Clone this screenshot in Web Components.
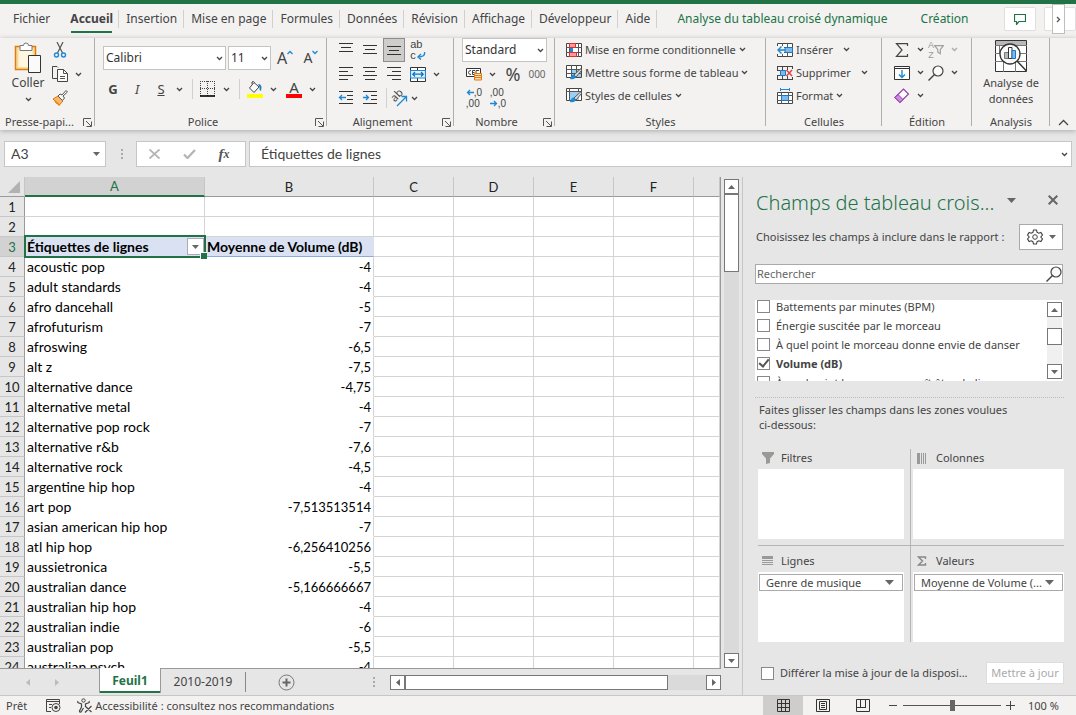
<!DOCTYPE html>
<html lang="fr">
<head>
<meta charset="utf-8">
<meta name="viewport" content="width=device-width, initial-scale=1">
<title>Classeur</title>
<style>
  html, body { margin: 0; height: 100%; }
  body {
    --ui: "Noto Sans", "Open Sans", sans-serif;
    --cell: Lato, "Noto Sans", sans-serif;
    --green: #217346;
    --line: #b1afad;
    font: 12px/16px var(--ui);
    color: #444;
    background: #e6e6e6;
    overflow: hidden;
  }
</style>
</head>
<body>
<excel-app></excel-app>

<script>
const ICONS = {
  chev: [7, 5, '<path d="M1 1l2.5 2.5L6 1" fill="none" stroke="#444" stroke-width="1.3"/>'],
  chevOff: [7, 5, '<path d="M1 1l2.5 2.5L6 1" fill="none" stroke="#aaa" stroke-width="1.3"/>'],
  chevR: [5, 7, '<path d="M1 1l2.5 2.5L1 6" fill="none" stroke="#555" stroke-width="1.3"/>'],
  collapse: [11, 7, '<path d="M1 6l4.500-4.500L10 6" fill="none" stroke="#444" stroke-width="1.3"/>'],
  down: [9, 5, '<path d="M0 0h9L4.500 5z" fill="#666"/>'],
  downS: [7, 4, '<path d="M0 0h7L3.500 4z" fill="#666"/>'],
  upS: [7, 4, '<path d="M0 4h7L3.500 0z" fill="#666"/>'],
  leftS: [4, 7, '<path d="M4 0v7L0 3.500z" fill="#666"/>'],
  rightS: [4, 7, '<path d="M0 0v7l4-3.500z" fill="#666"/>'],
  leftOff: [4, 7, '<path d="M4 0v7L0 3.500z" fill="#bbb"/>'],
  rightOff: [4, 7, '<path d="M0 0v7l4-3.500z" fill="#bbb"/>'],
  launcher: [9, 9, '<path d="M.5 8V.5H8M3 3l5 5M8.500 3.500v5h-5" fill="none" stroke="#555"/>'],
  paste: [28, 31, '<path d="M1.500 4.500h20v23h-20z" fill="#fbdc97" stroke="#e07b10" stroke-width="1.5"/><path d="M4.500 7h14v18h-14z" fill="#fff6e0"/><path d="M6 8.500v-5h3.500a2.500 2.500 0 0 1 5 0H18v5z" fill="#fff" stroke="#777"/><path d="M14.500 13.500h12v17h-12z" fill="#fafafa" stroke="#333"/>'],
  cut: [16, 16, '<path d="M5 0l5.500 11M11 0L5.500 11" stroke="#555" fill="none" stroke-width="1.2"/><circle cx="4.500" cy="13" r="2" fill="none" stroke="#1e88d2" stroke-width="1.4"/><circle cx="11.500" cy="13" r="2" fill="none" stroke="#1e88d2" stroke-width="1.4"/>'],
  copy: [16, 16, '<path d="M6 12.500H.5V.5H5l1 1" fill="none" stroke="#444"/><path d="M5.500 3.500h6l4 4v8h-10z" fill="#fafafa" stroke="#444"/><path d="M11.500 3.500v4h4M8 10.500h5M8 12.500h5" fill="none" stroke="#555"/>'],
  brush: [16, 16, '<path d="M1 9l5-3 5 5-4 4.500q-1-2-3-2.500-1-2.500-3-4z" fill="#fbb862" stroke="#e07b10"/><path d="M2 10l6 5" stroke="#e07b10"/><path d="M6 6l2-2 2 1 4-4.500 1.500 1.500L11 6l1.500 2L10.500 10.500z" fill="#fafafa" stroke="#555"/>'],
  borders: [16, 16, '<path d="M.5 0v15M14.500 0v15M0 .5h15M7.500 0v15M0 7.500h15" stroke="#444" stroke-dasharray="1 1" fill="none"/><path d="M0 15h15" stroke="#000" stroke-width="1.6"/>'],
  fill: [16, 17, '<path d="M7 1.500L12 6l-5 5.500L2.500 7zM5 3V1q1.500-1.500 2.500.5" fill="#fafafa" stroke="#444"/><path d="M11 3q3 0 3.500 3l-.5 4q-2-1-1.500-4z" fill="#1e78c0"/><path d="M0 13h16v4H0z" fill="#ff0"/>'],
  alT: lines([[1,15,1],[3,13,5],[1,15,9]], 16, 14),
  alM: lines([[1,15,3],[3,13,7],[1,15,11]], 16, 14),
  alB: lines([[1,15,4],[3,13,8],[1,15,12]], 16, 14),
  alL: lines([[1,15,1],[1,10,5],[1,15,9],[1,10,13]], 16, 15),
  alC: lines([[1,15,1],[3,13,5],[1,15,9],[3,13,13]], 16, 15),
  alR: lines([[1,15,1],[6,15,5],[1,15,9],[6,15,13]], 16, 15),
  outdent: [16, 14, '<path d="M1 .5h14M9 4.500h6M9 8.500h6M1 12.500h14" stroke="#333"/><path d="M8 6.500H2M4 4L1.500 6.500 4 9" stroke="#1e88d2" fill="none" stroke-width="1.3"/>'],
  indent: [16, 14, '<path d="M1 .5h14M9 4.500h6M9 8.500h6M1 12.500h14" stroke="#333"/><path d="M1 6.500h5.500M4 4l2.500 2.500L4 9" stroke="#1e88d2" fill="none" stroke-width="1.3"/>'],
  merge: [16, 15, '<path d="M.5 .5h15v14H.5z" fill="#fff" stroke="#333"/><path d="M7.500 0v4M7.500 11v4" stroke="#333"/><path d="M.5 3.500h15v7.500H.5z" fill="#e2f1fc" stroke="#1e88d2" stroke-width="1.2"/><path d="M3 7.200h10M5 5L2.800 7.200 5 9.500M11 5l2.200 2.200L11 9.500" stroke="#1070b8" fill="none" stroke-width="1.2"/>'],
  wrapArrow: [10, 8, '<path d="M8.500 0q1 5-6.500 5M5 2L2 5l3 2.500" stroke="#1e88d2" fill="none" stroke-width="1.4"/>'],
  orientArrow: [12, 12, '<path d="M1 11L10 2M5.500 1.500h5v5" stroke="#1e88d2" fill="none" stroke-width="1.3"/>'],
  currency: [16, 14, '<path d="M.5 1.500h14v8H.5z" fill="#fff" stroke="#333"/><path d="M5 3.500q-2.500 0-2.500 2t2.500 2M9 3.500H6.500v4H9M6.500 5.500h2M10 7V3.500h3" fill="none" stroke="#444"/><path d="M8.500 6.500h7v6.500h-7z" fill="#fbdcb8" stroke="#e07b10"/><path d="M8.500 8.500h7M8.500 10.500h7" stroke="#e07b10"/>'],
  arrL: [8, 7, '<path d="M8 3.500H1.500M4 1L1.500 3.500 4 6" stroke="#1e88d2" fill="none" stroke-width="1.3"/>'],
  arrR: [8, 7, '<path d="M0 3.500h6.500M4 1l2.500 2.500L4 6" stroke="#1e88d2" fill="none" stroke-width="1.3"/>'],
  condFmt: [16, 14, '<path d="M.5 .5h15v13H.5z" fill="#fff" stroke="#444"/><path d="M0 4.500h16M0 9.500h16M3.500 0v14M12.500 0v14" stroke="#555"/><path d="M3.500 .5h6v4h-6zM3.500 9.500h7v4h-7z" fill="#ff9a9a" stroke="#e03030"/><path d="M4 5h3v4H4z" fill="#1e88d2"/>'],
  tableFmt: [16, 15, '<path d="M.5 .5h15v12H.5z" fill="#fff" stroke="#444"/><path d="M5 5h10v7H5z" fill="#9ccdf2"/><path d="M0 4.500h16M0 8.500h16M5.500 0v13M10.500 0v13" stroke="#555"/><path d="M15 3.500L8 10l2 2 5.500-6.500z" fill="#ddd" stroke="#555"/><path d="M8 9.500q-3 0-4 4.500 5 1 6-2.500z" fill="#1e88d2"/>'],
  cellStyle: [16, 15, '<path d="M.5 .5h15v12H.5z" fill="#fff" stroke="#444"/><path d="M4 4h9v8H4z" fill="#9ccdf2"/><path d="M0 3.500h16M3.500 0v13M12.500 0v4" stroke="#555"/><path d="M15 3.500L8 10l2 2 5.500-6.500z" fill="#ddd" stroke="#555"/><path d="M8 9.500q-3 0-4 4.500 5 1 6-2.500z" fill="#1e88d2"/>'],
  insert: [16, 14, '<path d="M.5 .5h15v13H.5z" fill="#fff" stroke="#444"/><path d="M0 4.500h16M0 9.500h16M5.500 0v14M10.500 0v14" stroke="#555"/><path d="M8 4.500h7.500v5H8z" fill="#7db9ec" stroke="#1e78c0"/><path d="M0 3h7v8H0z" fill="#f3f2f1"/><path d="M8 7H1.500M4.500 3.500L1 7l3.500 3.500" stroke="#1e88d2" fill="none" stroke-width="1.4"/>'],
  remove: [16, 14, '<path d="M0 .5h15.500M0 13.500h15.500M3.500 4.500H0M3.500 9.500H0M.5 0v4M.5 10v4M5.500 0v4M10.500 0v4M5.500 10v4M10.500 10v4M15.500 0v3M15.500 11v3" stroke="#444" fill="none"/><path d="M3.500 4.500h5v5h-5z" fill="#7db9ec" stroke="#1e78c0"/><path d="M9.500 4l5.500 6M15 4l-5.500 6" stroke="#e04545" stroke-width="1.5"/>'],
  format: [16, 16, '<path d="M.5 4.500h15v11H.5z" fill="#fff" stroke="#444"/><path d="M0 7.500h16M0 12.500h16M4.500 4v12M11.500 4v12" stroke="#555"/><path d="M4.500 7.500h7v5h-7z" fill="#7db9ec" stroke="#1e78c0"/><path d="M3.500 0v3M12.500 0v3M4 1.500h8" stroke="#1e88d2"/>'],
  sigma: [14, 14, '<path d="M12.500 3V.7H1.500L7 7l-5.500 6.300h11V11" fill="none" stroke="#444" stroke-width="1.2"/>'],
  fillDown: [16, 14, '<path d="M.5 .5h15v13H.5zM0 2.500h16" fill="#fff" stroke="#333"/><path d="M8 4v7.500M5 8.500l3 3 3-3" stroke="#1e88d2" fill="none" stroke-width="1.4"/>'],
  eraser: [16, 16, '<path d="M1 9.500L9.500 1l5 5L6 14.500z" fill="#fff" stroke="#8f3fa8" stroke-width="1.2"/><path d="M1 9.500L4 6.500l5 5L6 14.500z" fill="#d08be0" stroke="#8f3fa8"/>'],
  funnelOff: [10, 10, '<path d="M.7 .7h8.600l-3 4v4l-2.500-1.500V4.700z" fill="none" stroke="#a0a0a0" stroke-width="1.200"/>'],
  loupe: [16, 16, '<circle cx="10" cy="6" r="5" fill="#fafafa" stroke="#444" stroke-width="1.2"/><path d="M6.500 9.500L.5 15.500" stroke="#444" stroke-width="1.4"/>'],
  analyse: [32, 32, '<path d="M.5 .5h31v31H.5z" fill="#fff" stroke="#333"/><path d="M1 1h30v4H1z" fill="#b8b8b8"/><path d="M0 5.500h32M0 13.500h32M0 21.500h32M8.500 21v11M20.500 21v11M4.500 5v8" stroke="#777" fill="none"/><circle cx="15" cy="14" r="10" fill="#fafafa" stroke="#333" stroke-width="1.3"/><path d="M9.500 12.500h4v6h-4z" fill="#b8b8b8" stroke="#777"/><path d="M13.500 7.500h3.500v11h-3.500z" fill="#fff" stroke="#333"/><path d="M17 10.500h3.500v8H17z" fill="#7db9ec" stroke="#1e78c0"/><path d="M22 21l9.500 10" stroke="#333" stroke-width="1.5"/>'],
  comment: [12, 11, '<path d="M.5 .5h11v7H5l-2.500 3v-3h-2z" fill="none" stroke="#217346" stroke-width="1.2"/>'],
  cross: [11, 10, '<path d="M.5 .5l10 9M10.500 .5l-10 9" stroke="#b4b4b4" stroke-width="1.8"/>'],
  close: [10, 10, '<path d="M.7 .7l8.600 8.600M9.300 .7L.7 9.300" stroke="#666" stroke-width="2"/>'],
  check: [13, 10, '<path d="M1 5.500L4.500 9 12 1" fill="none" stroke="#b4b4b4" stroke-width="2.2"/>'],
  corner: [12, 12, '<path d="M12 0v12H0z" fill="#b2b2b2"/>'],
  dots: [3, 12, '<path d="M1 1h2v2H1zM1 5h2v2H1zM1 9h2v2H1z" fill="#aaa"/>'],
  plus: [17, 17, '<circle cx="8.500" cy="8.500" r="7.500" fill="none" stroke="#777"/><path d="M4.500 8.500h8M8.500 4.500v8" stroke="#666" stroke-width="2"/>'],
  gear: [16, 16, '<path d="M6.500 1h3l.6 2.300 1.600.9 2.200-.7 1.600 2.600L13.800 8l1.700 1.900-1.600 2.600-2.200-.7-1.600.9L9.500 15h-3l-.6-2.300-1.600-.9-2.200.7L.5 9.900 2.200 8 .5 6.100l1.600-2.600 2.200.7 1.600-.9z" fill="#fff" stroke="#444" stroke-width="1.100"/><circle cx="8" cy="8" r="2.300" fill="none" stroke="#444"/>'],
  funnel: [12, 12, '<path d="M0 0h12v2L8 6.500V11l-4 1V6.500L0 2z" fill="#999"/>'],
  cols: [10, 11, '<path d="M0 0h3v11H0zM4 0h1v11H4zM6 0h1v11H6zM8 0h1v11H8z" fill="#999"/>'],
  rows: [11, 10, '<path d="M0 0h11v3H0zM0 4h11v1H0zM0 6h11v1H0zM0 8h11v1H0z" fill="#999"/>'],
  sigmaG: [10, 10, '<path d="M8.500 3V1h-7l4 4-4 4h7V7" fill="none" stroke="#888" stroke-width="1.4"/>'],
  record: [15, 13, '<path d="M5 12.500H.5V.5h13V5M0 2.500h14M3 5.500h3M3 8.500h2" fill="none" stroke="#444"/><circle cx="10" cy="8.500" r="4" fill="#f3f2f1" stroke="#444"/><circle cx="10" cy="8.500" r="1.800" fill="#444"/>'],
  access: [16, 15, '<circle cx="6.500" cy="2.500" r="1.700" fill="none" stroke="#444"/><path d="M1 3q-1 1.500 1 2l2.500 1v3L2.500 13q0 1.500 1.500 1l2.500-4M12 3q1 1.500-1 2l-2.500 1v2M8 8l6.500 6M14.500 8L8 14.500" fill="none" stroke="#444" stroke-width="1.200"/>'],
  vGrid: [13, 13, '<path d="M.5 .5h12v12H.5zM4.500 0v13M8.500 0v13M0 4.500h13M0 8.500h13" fill="none" stroke="#333"/>'],
  vPage: [14, 13, '<path d="M.5 .5h13v12H.5zM3.500 2.500h7v8h-7zM5 4.500h4M5 6.500h4M5 8.500h4" fill="none" stroke="#333"/>'],
  vBreak: [14, 13, '<path d="M.5 .5h13v12H.5zM4.500 0v8.500M0 8.500h9.500M9.500 0v9" fill="none" stroke="#333"/>'],
  minus: [9, 9, '<path d="M0 4.500h8" stroke="#444"/>'],
  plusS: [9, 9, '<path d="M0 4.500h9M4.500 0v9" stroke="#444"/>'],
  tipUp: [6, 5, '<path d="M.5 4L3 1.500 5.500 4" fill="none" stroke="#1e88d2" stroke-width="1.300"/>'],
  tipDown: [6, 5, '<path d="M.5 1L3 3.500 5.500 1" fill="none" stroke="#1e88d2" stroke-width="1.300"/>'],
};
function lines(list, w, h) {
  return [w, h, '<path d="' + list.map(([a, b, y]) => `M${a} ${y - .5}H${b}`).join('') + '" stroke="#333"/>'];
}

/* Base: renders `html()` and `css()` into an open shadow root. */
class Base extends HTMLElement {
  connectedCallback() {
    if (this.shadowRoot) return;
    const t = document.createElement('template');
    t.innerHTML = `<style>
      *{box-sizing:border-box}
      button,select,input{font:inherit;color:inherit;margin:0}
      button{background:none;border:0;padding:0;display:flex;align-items:center;justify-content:center}
      ${this.css()}</style>${this.html()}`;
    this.attachShadow({ mode: 'open' }).append(t.content.cloneNode(true));
  }
  css() { return ''; }
  html() { return '<slot></slot>'; }
  at(n, d = '') { return this.getAttribute(n) ?? d; }
}
const def = (n, c) => customElements.define(n, c);
const ico = n => `<ui-icon name="${n}"></ui-icon>`;

def('ui-icon', class extends Base {
  css() { return ':host{display:block;flex:none}svg{display:block}'; }
  html() {
    const [w, h, d] = ICONS[this.at('name')];
    return `<svg width="${w}" height="${h}" viewBox="0 0 ${w} ${h}" aria-hidden="true">${d}</svg>`;
  }
});

/* Icon button; slotted text follows the icon, `menu` adds the drop arrow. */
def('tool-button', class extends Base {
  css() { return `
    :host{display:block;flex:none}
    button{height:24px;min-width:24px;gap:3px;white-space:nowrap}
    :host([far]) button{gap:10px}
    :host([menu]) .face{min-width:24px}
    .face{display:flex;justify-content:center;align-items:center;gap:3px}
    :host([text]) .face{min-width:0}
    :host([pressed]) button{background:#cfcdcc;outline:1px solid #8f8d8b;outline-offset:-1px;width:22px;min-width:22px;margin:0 1px}`; }
  html() {
    const m = this.at('menu', null);
    return `<button aria-label="${this.at('label')}"><span class="face">${this.at('icon') ? ico(this.at('icon')) : ''}<slot></slot></span>${m === null ? '' : ico(m || 'chev')}</button>`;
  }
});

def('combo-box', class extends Base {
  css() { return `
    :host{display:grid;grid-template:1fr/1fr;height:24px;flex:none}
    select,ui-icon{grid-area:1/1}
    select{appearance:none;width:100%;border:1px solid #c6c4c2;background:#fff;padding:0 2px;color:#333;border-radius:0}
    ui-icon{place-self:center end;margin-right:3px;pointer-events:none}`; }
  html() { return `<select aria-label="${this.at('label')}"><option>${this.at('value')}</option></select>${ico('chev')}`; }
});

def('ribbon-group', class extends Base {
  css() { return `
    :host{display:flex;flex-direction:column;flex:none;height:92px;background:linear-gradient(var(--line),var(--line)) right top/1px 88px no-repeat}
    .body{height:76px}
    footer{height:16px;display:grid;grid-template-columns:1fr auto;align-items:center;font-size:11px}
    :host([launcher]) footer{padding-right:3px}
    :host([launcher]) span{padding-right:4px}
    span{text-align:center;white-space:nowrap}`; }
  html() {
    return `<div class="body"><slot></slot></div><footer><span>${this.at('label')}</span>${this.hasAttribute('launcher') ? `<button aria-label="Options ${this.at('label')}">${ico('launcher')}</button>` : ''}</footer>`;
  }
});

def('ribbon-tabs', class extends Base {
  css() { return `
    :host{display:flex;height:34px;padding-left:6px;align-items:stretch;position:relative}
    nav{display:flex;align-items:center;height:30px}
    a{color:#444;text-decoration:none;white-space:nowrap;padding:0 6px 0 7px;line-height:18px;border-right:1px solid #d2d0ce}
    a.file{padding-right:13px;border:0}
    a.on{font-weight:700;padding-right:5px}
    a.on span{box-shadow:0 5px 0 -1px #f3f2f1,0 7px 0 -1px var(--green)}
    a.ctx{color:var(--green);border:0;padding:0 13px 0 20px}
    .end{margin-left:auto;display:flex;gap:8px;align-items:center;height:30px}
    .end button{width:32px;height:24px;border:1px solid #e1dfdd;border-radius:2px;background:#fff}
    .more{position:absolute;right:11px;top:0;width:13px;height:30px;border:1px solid #c0bebc;background:#fff}`; }
  html() {
    return `<nav aria-label="Onglets"><a class="file" href="#">Fichier</a><a class="on" href="#"><span>Accueil</span></a>${
      ['Insertion','Mise en page','Formules','Données','Révision','Affichage','Développeur','Aide'].map(t => `<a href="#">${t}</a>`).join('')}<a class="ctx" href="#">Analyse du tableau croisé dynamique</a><a class="ctx" href="#">Création</a></nav>
      <div class="end"><button aria-label="Commentaires">${ico('comment')}</button><button aria-label="Partager"></button></div>
      <button class="more" aria-label="Plus">${ico('chevR')}</button>`;
  }
});

def('excel-ribbon', class extends Base {
  css() { return `
    :host{display:block;background:#f3f2f1;border-top:4px solid var(--green)}
    .groups{display:flex;height:92px;box-shadow:0 1px 5px #aaa;background:#f3f2f1}
    .row{display:flex;align-items:center;height:24px}
    .clip{width:95px}.font{width:232px}.align{width:127px}.num{width:101px}.styles{width:211px}.cells{width:116px}.edit{width:90px}.ana{width:78px}
    .two{display:flex;padding-left:8px}
    .big{display:flex;flex-direction:column;align-items:center;justify-content:flex-start;text-align:center;width:40px;padding-top:4px;gap:2px}
    .big ui-icon:last-child{padding-top:4px}
    .wide{width:100%;padding-top:2px;gap:3px;font-size:11px}
    .pad8{padding:0 8px}
    .pad7{padding-left:7px}
    .fonts{padding:8px 0 0 6px;display:flex;flex-direction:column;gap:7px}
    .combos{gap:2px;padding-left:2px}
    .roomy tool-button[menu]{margin-right:5px}
    .sep{width:1px;height:20px;background:#d2d0ce;margin:0 3px 0 4px}
    .name{width:123px}.size{width:43px}
    b,i,u{font-size:13px}
    .A{font-size:16px}.a{font-size:14px}
    .glyph{display:flex;align-items:flex-start}
    .color{border-bottom:4px solid red;font-size:15px;line-height:13px;width:16px;text-align:center}
    .mini{font:10px/11px "Liberation Sans",sans-serif;display:grid;justify-items:start}
    .mini span{display:flex;align-items:center;height:11px}
    .wrap{font-size:11px}
    .orient{display:grid;width:18px;height:18px}
    .orient>*{grid-area:1/1}
    .orient ui-icon{place-self:end}
    .rot{place-self:start;transform:rotate(-45deg);font-size:11px;line-height:12px}
    .pct{font-size:18px}.ooo{font-size:10px;color:#666}
    .az{display:grid;font:9px/10px "Liberation Sans",sans-serif;color:#999}
    .over{display:flex;align-items:center}
    .three{padding-left:8px;font-size:11px}
    .three .row{height:23px}
    .styles .three{padding-left:11px}
    .cells .three{padding-left:11px}
    .fold{flex:1;display:flex;align-items:flex-end;justify-content:center;padding-bottom:4px}`; }
  html() { return `
    <ribbon-tabs></ribbon-tabs>
    <div class="groups">
      <ribbon-group class="clip" label="Presse-papi..." launcher>
        <div class="two">
          <button class="big">${ico('paste')}<span>Coller</span>${ico('chev')}</button>
          <div>
            <div class="row"><tool-button icon="cut" label="Couper"></tool-button></div>
            <div class="row"><tool-button icon="copy" label="Copier" menu></tool-button></div>
            <div class="row"><tool-button icon="brush" label="Reproduire la mise en forme"></tool-button></div>
          </div>
        </div>
      </ribbon-group>
      <ribbon-group class="font" label="Police" launcher>
        <div class="fonts roomy">
          <div class="row combos"><combo-box class="name" label="Police" value="Calibri"></combo-box><combo-box class="size" label="Taille" value="11"></combo-box>
            <tool-button label="Augmenter"><span class="glyph"><span class="A">A</span>${ico('tipUp')}</span></tool-button>
            <tool-button label="Réduire"><span class="glyph"><span class="a">A</span>${ico('tipDown')}</span></tool-button></div>
          <div class="row"><tool-button label="Gras"><b>G</b></tool-button><tool-button label="Italique"><i>I</i></tool-button><tool-button label="Souligné" menu><u>S</u></tool-button><span class="sep"></span>
            <tool-button icon="borders" label="Bordures" menu></tool-button><span class="sep"></span>
            <tool-button icon="fill" label="Remplissage" menu></tool-button><tool-button label="Couleur" menu><span class="color">A</span></tool-button></div>
        </div>
      </ribbon-group>
      <ribbon-group class="align" label="Alignement" launcher>
        <div class="pad7">
          <div class="row"><tool-button icon="alT" label="Haut"></tool-button><tool-button icon="alM" label="Milieu"></tool-button><tool-button icon="alB" label="Bas" pressed></tool-button><tool-button label="Renvoi à la ligne"><span class="mini wrap"><span>ab</span><span>c${ico('wrapArrow')}</span></span></tool-button></div>
          <div class="row"><tool-button icon="alL" label="Gauche"></tool-button><tool-button icon="alC" label="Centre"></tool-button><tool-button icon="alR" label="Droite"></tool-button><tool-button icon="merge" label="Fusionner" menu></tool-button></div>
          <div class="row"><tool-button icon="outdent" label="Diminuer le retrait"></tool-button><tool-button icon="indent" label="Augmenter le retrait"></tool-button><span class="sep"></span><tool-button label="Orientation" menu text><span class="orient"><span class="rot">ab</span>${ico('orientArrow')}</span></tool-button></div>
        </div>
      </ribbon-group>
      <ribbon-group class="num" label="Nombre" launcher>
        <div class="pad8 roomy">
          <combo-box label="Format de nombre" value="Standard"></combo-box>
          <div class="row"><tool-button icon="currency" label="Monétaire" menu></tool-button><tool-button label="Pourcentage"><span class="pct">%</span></tool-button><tool-button label="Milliers"><span class="ooo">000</span></tool-button></div>
          <div class="row"><tool-button label="Ajouter une décimale"><span class="mini"><span>${ico('arrL')},0</span><span>,00</span></span></tool-button><tool-button label="Réduire les décimales"><span class="mini"><span>,00</span><span>${ico('arrR')},0</span></span></tool-button></div>
        </div>
      </ribbon-group>
      <ribbon-group class="styles" label="Styles">
        <div class="three">
          <div class="row"><tool-button icon="condFmt" menu text>Mise en forme conditionnelle</tool-button></div>
          <div class="row"><tool-button icon="tableFmt" menu text>Mettre sous forme de tableau</tool-button></div>
          <div class="row"><tool-button icon="cellStyle" menu text>Styles de cellules</tool-button></div>
        </div>
      </ribbon-group>
      <ribbon-group class="cells" label="Cellules">
        <div class="three">
          <div class="row"><tool-button icon="insert" menu text far>Insérer</tool-button></div>
          <div class="row"><tool-button icon="remove" menu text far>Supprimer</tool-button></div>
          <div class="row"><tool-button icon="format" menu text>Format</tool-button></div>
        </div>
      </ribbon-group>
      <ribbon-group class="edit" label="Édition">
        <div class="three">
          <div class="row"><tool-button icon="sigma" label="Somme" menu></tool-button><tool-button label="Trier et filtrer" menu="chevOff"><span class="over"><span class="az"><span>A</span><span>Z</span></span>${ico('funnelOff')}</span></tool-button></div>
          <div class="row"><tool-button icon="fillDown" label="Remplissage" menu></tool-button><tool-button icon="loupe" label="Rechercher" menu></tool-button></div>
          <div class="row"><tool-button icon="eraser" label="Effacer" menu></tool-button></div>
        </div>
      </ribbon-group>
      <ribbon-group class="ana" label="Analysis">
        <button class="big wide">${ico('analyse')}<span>Analyse de<br>données</span></button>
      </ribbon-group>
      <div class="fold"><button aria-label="Réduire le ruban">${ico('collapse')}</button></div>
    </div>`; }
});

def('formula-bar', class extends Base {
  css() { return `
    :host{display:flex;padding:11px 4px 10px;font-family:var(--cell);font-size:14px}
    .box{height:26px;border:1px solid #c6c6c6;background:#fff;display:flex;align-items:center}
    input{border:0;outline:0;background:none;min-width:0;flex:1;padding:0;color:#444}
    .name{width:102px;padding:0 5px 0 6px}
    .dots{width:30px;display:flex;align-items:center;justify-content:center}
    .acts{width:110px;justify-content:space-around;padding:0 4px 0 0}
    .fx{font:italic 700 15px "Liberation Serif",serif;color:#555}
    .fx small{font-size:12px}
    .text{flex:1;margin-left:3px;padding:0 3px 0 11px}`; }
  html() { return `
    <div class="box name"><input aria-label="Zone Nom" value="A3">${ico('downS')}</div>
    <div class="dots">${ico('dots')}</div>
    <div class="box acts"><button aria-label="Annuler">${ico('cross')}</button><button aria-label="Entrer">${ico('check')}</button><button class="fx" aria-label="Insérer une fonction">f<small>x</small></button></div>
    <div class="box text"><input aria-label="Barre de formule" value="Étiquettes de lignes">${ico('chev')}</div>`; }
});

def('sheet-grid', class extends Base {
  css() { return `
    :host{display:block;overflow:hidden;background:#fff;border-right:1px solid #999;font:14px/18px var(--cell);color:#000}
    table{border-spacing:0;table-layout:fixed;width:100%}
    th,td{height:20px;padding:0 2px;border:solid #d4d4d4;border-width:0 1px 1px 0;white-space:nowrap;overflow:hidden}
    th{background:#e6e6e6;border-color:#c6c6c6;font-weight:400;font-size:13px;color:#222}
    thead th{border-bottom-color:#999}
    tbody th{border-right-color:#999;padding:0}
    thead th:first-child{padding:0 0 0 8px}
    th.sel{background:#d2d2d2;color:var(--green)}
    thead .sel{border-bottom:2px solid var(--green)}
    .h{width:25px}.a{width:180px}.b{width:169px}.c{width:80px}
    .n{text-align:right;font-size:13px}
    .p td:nth-child(2){border-color:transparent}
    .p td:nth-child(3){border-bottom-color:transparent}
    .hd td:nth-child(-n+3){background:#d9e1f2;font-weight:700;border-color:#d9e1f2;border-bottom-color:#8ea9db}
    .hd .act{position:relative;overflow:visible;padding-right:0}
    .act::before{content:"";position:absolute;inset:-2px -2px -2px -1px;border:2px solid var(--green);pointer-events:none}
    .act::after{content:"";position:absolute;right:-3px;bottom:-3px;width:6px;height:6px;background:var(--green);border:solid #fff;border-width:1px 0 0 1px}
    .cell{display:flex;justify-content:space-between;align-items:center;height:19px}
    .cell button{width:17px;height:17px;background:#fff;border:1px solid #aab}`; }
  html() {
    const data = [['acoustic pop','-4'],['adult standards','-4'],['afro dancehall','-5'],['afrofuturism','-7'],['afroswing','-6,5'],['alt z','-7,5'],['alternative dance','-4,75'],['alternative metal','-4'],['alternative pop rock','-7'],['alternative r&amp;b','-7,6'],['alternative rock','-4,5'],['argentine hip hop','-4'],['art pop','-7,513513514'],['asian american hip hop','-7'],['atl hip hop','-6,256410256'],['aussietronica','-5,5'],['australian dance','-5,166666667'],['australian hip hop','-4'],['australian indie','-6'],['australian pop','-5,5'],['australian psych','-4']];
    const e = '<td></td>'.repeat(5);
    return `<table><colgroup><col class="h"><col class="a"><col class="b"><col class="c"><col class="c"><col class="c"><col class="c"><col></colgroup>
      <thead><tr><th>${ico('corner')}</th><th class="sel">A</th>${['B','C','D','E','F',''].map(c => `<th>${c}</th>`).join('')}</tr></thead>
      <tbody><tr><th>1</th><td></td><td></td>${e}</tr><tr><th>2</th><td></td><td></td>${e}</tr>
      <tr class="hd"><th class="sel">3</th><td class="act"><div class="cell">Étiquettes de lignes<button aria-label="Filtrer">${ico('downS')}</button></div></td><td>Moyenne de Volume (dB)</td>${e}</tr>
      ${data.map(([l, v], i) => `<tr class="p"><th>${i + 4}</th><td>${l}</td><td class="n">${v}</td>${e}</tr>`).join('')}</tbody></table>`;
  }
});

/* Scroll bar with fixed thumb length; `dir` is "v" or "h". */
def('scroll-bar', class extends Base {
  css() { return `
    :host{display:flex;background:#dadada;flex:none}
    :host([dir=v]){flex-direction:column;width:15px}
    :host([dir=h]){height:15px}
    button,.thumb{background:#fff;border:1px solid #777;flex:none}
    button{width:15px;height:15px}
    .thumb{flex:0 1 var(--thumb)}
    .pre{flex:0 0 var(--pre,0px)}
    .rest{flex:1}`; }
  html() {
    const v = this.at('dir') === 'v';
    return `<button aria-label="Précédent">${ico(v ? 'upS' : 'leftS')}</button><span class="pre"></span><span class="thumb"></span><span class="rest"></span><button aria-label="Suivant">${ico(v ? 'downS' : 'rightS')}</button>`;
  }
});

def('sheet-tabs', class extends Base {
  css() { return `
    :host{display:flex;height:27px;align-items:stretch;padding-right:21px;font-size:12px}
    .nav{width:99px;display:flex;gap:25px;padding-left:26px;align-items:center;border-top:1px solid #999}
    .on{width:62px;background:#fff;color:var(--green);font-weight:700;border:solid #999;border-width:0 1px;height:25px;box-shadow:inset 0 -2px var(--green)}
    .off{width:84px;border-top:1px solid #999;color:#444}
    .tail{flex:1;display:flex;align-items:center;border-top:1px solid #999}
    .bar{width:1px;height:20px;background:#888}
    .add{margin:0 0 0 32px}
    .dots{margin-left:auto;margin-right:15px}
    scroll-bar{width:331px;--thumb:263px}`; }
  html() { return `
    <div class="nav"><button aria-label="Feuille précédente">${ico('leftOff')}</button><button aria-label="Feuille suivante">${ico('rightOff')}</button></div>
    <button class="on">Feuil1</button><button class="off">2010-2019</button>
    <div class="tail"><span class="bar"></span><button class="add" aria-label="Nouvelle feuille">${ico('plus')}</button><span class="dots">${ico('dots')}</span><scroll-bar dir="h"></scroll-bar></div>`; }
});

def('field-check', class extends Base {
  css() { return `
    :host{display:block}
    label{display:flex;align-items:center;gap:6px;height:19px;white-space:nowrap}
    input{appearance:none;width:13px;height:13px;border:1px solid #888;background:#fff;flex:none;display:grid;place-items:center}
    input:checked::after{content:"";width:8px;height:4px;border:solid #555;border-width:0 0 2px 2px;transform:rotate(-50deg);margin-bottom:3px}
    :host([bold]){font-weight:700}`; }
  html() { return `<label><input type="checkbox" ${this.hasAttribute('bold') ? 'checked' : ''}><slot></slot></label>`; }
});

def('drop-zone', class extends Base {
  css() { return `
    :host{display:block;min-width:0}
    h3{font:inherit;margin:0 0 2px;height:18px;display:flex;align-items:center;padding-left:4px}
    h3 span{width:19px}
    .box{height:70px;background:#fff;padding:2px 1px}
    button{width:100%;height:17px;border:1px solid #aaa;justify-content:space-between;padding:0 8px 0 6px;white-space:nowrap;font-size:11px}`; }
  html() { return `<h3><span>${ico(this.at('icon'))}</span>${this.at('label')}</h3><div class="box">${this.at('field') ? `<button>${this.at('field')}${ico('down')}</button>` : ''}</div>`; }
});

def('field-pane', class extends Base {
  css() { return `
    :host{display:flex;flex-direction:column;width:334px;flex:none;border-left:1px solid #c6c6c6;padding:10px 12px 0;font-size:11px;color:#444}
    header{height:32px;display:flex;align-items:center;padding:0 6px 0 1px;color:#666}
    h2{font:300 20px/32px var(--ui);color:var(--green);margin:0;flex:1;white-space:nowrap}
    header div{display:flex;gap:32px;align-items:center;padding-bottom:6px}
    .pick{display:flex;justify-content:space-between;align-items:center;height:26px;margin:5px 1px 0;white-space:nowrap}
    .pick button{width:44px;height:26px;background:#fff;border:1px solid #aaa;gap:6px}
    .search{margin:14px 1px 0 0;height:20px;border:1px solid #aaa;background:#fff;display:flex;align-items:center}
    .search input{flex:1;min-width:0;border:0;padding:0 1px;background:none;outline:0}
    .search input::placeholder{color:#666;opacity:1}
    .list{margin:16px 1px 0 0;height:81px;background:#fff;display:flex;overflow:hidden;padding:0 1px 0 2px}
    .items{flex:1;margin-top:-3px}
    .list scroll-bar{margin:2px 0;--pre:11px;--thumb:17px;background:#f0f0f0}
    .hint{margin:16px 0 0;border-top:1px dotted #bbb;padding:4px 52px 1px 4px;line-height:15px}
    .zones{display:grid;grid-template-columns:153px 1fr;margin:16px 0 0 3px}
    .l{border-right:1px solid #b5b5b5;padding-right:6px}
    .r{padding-left:2px}
    .t{border-bottom:1px solid #b5b5b5;padding-bottom:6px}
    .b{padding-top:6px}
    .foot{display:flex;align-items:center;justify-content:space-between;margin:20px 0 0 6px}
    .foot button{height:22px;width:78px;background:#fff;border:1px solid #ddd;color:#aaa;white-space:nowrap}`; }
  html() { return `
    <header><h2>Champs de tableau crois...</h2><div><button aria-label="Options du volet">${ico('down')}</button><button aria-label="Fermer">${ico('close')}</button></div></header>
    <div class="pick"><span>Choisissez les champs à inclure dans le rapport :</span><button aria-label="Outils">${ico('gear')}${ico('downS')}</button></div>
    <div class="search"><input type="text" placeholder="Rechercher" aria-label="Rechercher">${ico('loupe')}</div>
    <div class="list"><div class="items"><field-check>Battements par minutes (BPM)</field-check><field-check>Énergie suscitée par le morceau</field-check><field-check>À quel point le morceau donne envie de danser</field-check><field-check bold>Volume (dB)</field-check><field-check>À quel point le morceau paraît être du live</field-check></div><scroll-bar dir="v"></scroll-bar></div>
    <p class="hint">Faites glisser les champs dans les zones voulues ci-dessous:</p>
    <div class="zones">
      <div class="l t"><drop-zone icon="funnel" label="Filtres"></drop-zone></div><div class="r t"><drop-zone icon="cols" label="Colonnes"></drop-zone></div>
      <div class="l b"><drop-zone icon="rows" label="Lignes" field="Genre de musique"></drop-zone></div><div class="r b"><drop-zone icon="sigmaG" label="Valeurs" field="Moyenne de Volume (..."></drop-zone></div>
    </div>
    <div class="foot"><field-check>Différer la mise à jour de la disposi...</field-check><button disabled>Mettre à jour</button></div>`; }
});

def('status-bar', class extends Base {
  css() { return `
    :host{display:flex;align-items:center;height:20px;background:#f3f2f1;border-top:1px solid #c6c6c6;padding-left:6px;font-size:11px;flex:none}
    .rec{margin:0 16px 0 19px}
    .acc{gap:2px}
    .views{margin-left:auto;display:flex;height:100%}
    .views button{width:40px}
    .views .on{background:#cfcdcc}
    .zoom{display:flex;align-items:center;width:126px;margin-left:6px;gap:5px}
    input{appearance:none;flex:1;min-width:0;height:11px;background:linear-gradient(#555,#555) center/100% 1px no-repeat}
    input::-webkit-slider-thumb{appearance:none;width:5px;height:11px;background:#666}
    .pm{width:9px}
    .pct{width:61px;padding-left:13px;white-space:nowrap}`; }
  html() { return `
    <span>Prêt</span><button class="rec" aria-label="Enregistrer une macro">${ico('record')}</button>
    <button class="acc">${ico('access')}Accessibilité : consultez nos recommandations</button>
    <div class="views"><button class="on" aria-label="Normal">${ico('vGrid')}</button><button aria-label="Mise en page">${ico('vPage')}</button><button aria-label="Sauts de page">${ico('vBreak')}</button></div>
    <div class="zoom"><button class="pm" aria-label="Zoom arrière">${ico('minus')}</button><input type="range" aria-label="Zoom" min="0" max="100" value="50"><button class="pm" aria-label="Zoom avant">${ico('plusS')}</button></div>
    <span class="pct">100 %</span>`; }
});

def('excel-app', class extends Base {
  css() { return `
    :host{display:flex;flex-direction:column;height:100vh}
    main{flex:1;display:flex;min-height:0}
    .sheet{flex:1;min-width:0;display:flex;flex-direction:column}
    .view{flex:1;display:flex;min-height:0}
    sheet-grid{flex:1;min-width:0}
    .view scroll-bar{margin:2px 3px 0;--thumb:78px}`; }
  html() { return `
    <excel-ribbon></excel-ribbon><formula-bar></formula-bar>
    <main><div class="sheet"><div class="view"><sheet-grid></sheet-grid><scroll-bar dir="v"></scroll-bar></div><sheet-tabs></sheet-tabs></div><field-pane></field-pane></main>
    <status-bar></status-bar>`; }
});
</script>
</body>
</html>
